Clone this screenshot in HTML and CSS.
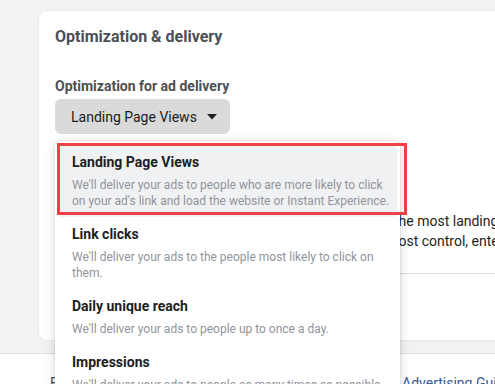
FILE: index.html
```html
<!DOCTYPE html>
<html>
	<head>
		<meta charset="utf-8" />
		<title>Optimization &amp; delivery</title>
		<link rel="stylesheet" href="styles.css">
	</head>
	<body>
		<div class="page">
			<section class="card">
				<h2 class="card-title">Optimization &amp; delivery</h2>
				<div class="field">
					<div class="field-label">Optimization for ad delivery</div>
					<div class="select-wrap">
						<button class="select">
							<span>Landing Page Views</span>
							<svg class="caret" width="10" height="6" viewBox="0 0 10 6"><polygon points="0,0 10,0 5,5.5" fill="#1c1e21"/></svg>
						</button>
						<div class="menu">
							<div class="item active">
								<div class="item-title">Landing Page Views</div>
								<div class="item-desc">We'll deliver your ads to people who are more likely to click on your ad's link and load the website or Instant Experience.</div>
							</div>
							<div class="item">
								<div class="item-title">Link clicks</div>
								<div class="item-desc">We'll deliver your ads to the people most likely to click on them.</div>
							</div>
							<div class="item">
								<div class="item-title">Daily unique reach</div>
								<div class="item-desc">We'll deliver your ads to people up to once a day.</div>
							</div>
							<div class="item">
								<div class="item-title">Impressions</div>
								<div class="item-desc">We'll deliver your ads to people as many times as possible.</div>
							</div>
							<div class="callout"></div>
						</div>
					</div>
					<div class="hint">
						<p class="hint-one">the most landing page views at the lowest cost.</p>
						<p class="hint-two">the most control, enter a cost cap.</p>
					</div>
				</div>
			</section>
		</div>
		<footer class="footer">
			<span>Facebook &copy; 2021</span>
			<a href="">Advertising Guidelines</a>
		</footer>
	</body>
</html>
```

FILE: styles.css
```css
*{
	margin: 0;
	padding: 0;
	box-sizing: border-box;
}

body{
	background: #f2f2f2;
	font-family: Roboto, "Liberation Sans", Arial, sans-serif;
	color: #1c1e21;
	overflow: hidden;
}

a{
	text-decoration: none;
}

.page{
	padding: 11px 0 13px 39px;
}

.card{
	height: 329px;
	background: #fff;
	border-radius: 8px 0 0 8px;
	box-shadow: 0 0 2px rgba(0, 0, 0, .12);
	padding: 16px;
}

.card-title{
	font-size: 16px;
	line-height: 20px;
	font-weight: 700;
	color: #4b4f56;
}

.field{
	margin-top: 30px;
}

.field-label{
	font-size: 14px;
	line-height: 18px;
	font-weight: 700;
	color: #4b4f56;
}

.select-wrap{
	position: relative;
	margin-top: 4px;
	width: 175px;
}

.select{
	display: flex;
	align-items: center;
	width: 175px;
	height: 35px;
	padding: 0 13px 0 16px;
	border: none;
	border-radius: 6px;
	background: #dadada;
	font-family: inherit;
	font-size: 14px;
	white-space: nowrap;
	color: #1c1e21;
}

.caret{
	flex: none;
	margin-left: auto;
}

.menu{
	position: absolute;
	left: 0;
	top: 42px;
	width: 345px;
	padding: 4px 3px;
	background: #fff;
	border-radius: 6px;
	box-shadow: 0 2px 12px rgba(0, 0, 0, .16), 0 0 0 1px rgba(0, 0, 0, .04);
	z-index: 2;
}

.item{
	padding: 8px 6px 8px 14px;
	border-radius: 4px;
}

.item.active{
	background: #f0f1f3;
}

.item-title{
	font-size: 14px;
	line-height: 18px;
	font-weight: 700;
	color: #1c1e21;
}

.item-desc{
	margin-top: 6px;
	font-size: 12px;
	line-height: 16px;
	color: #90949c;
}

.callout{
	position: absolute;
	left: 2px;
	top: 2px;
	width: 350px;
	height: 72px;
	border: 3px solid #ef4146;
}

.hint{
	margin-top: 77px;
	padding-bottom: 22px;
	margin-right: -16px;
	border-bottom: 1px solid #dadde1;
	font-size: 14px;
	line-height: 20px;
	white-space: nowrap;
	color: #1c1e21;
}

.hint-one{
	padding-left: 339px;
}

.hint-two{
	padding-left: 308px;
}

.footer{
	display: grid;
	grid-template-columns: 352px auto;
	height: 40px;
	padding: 20px 0 0 50px;
	background: #fff;
	border-top: 1px solid #dadde1;
	font-size: 14px;
	line-height: 18px;
	white-space: nowrap;
	color: #4b4f56;
}

.footer a{
	color: #385898;
}
```
